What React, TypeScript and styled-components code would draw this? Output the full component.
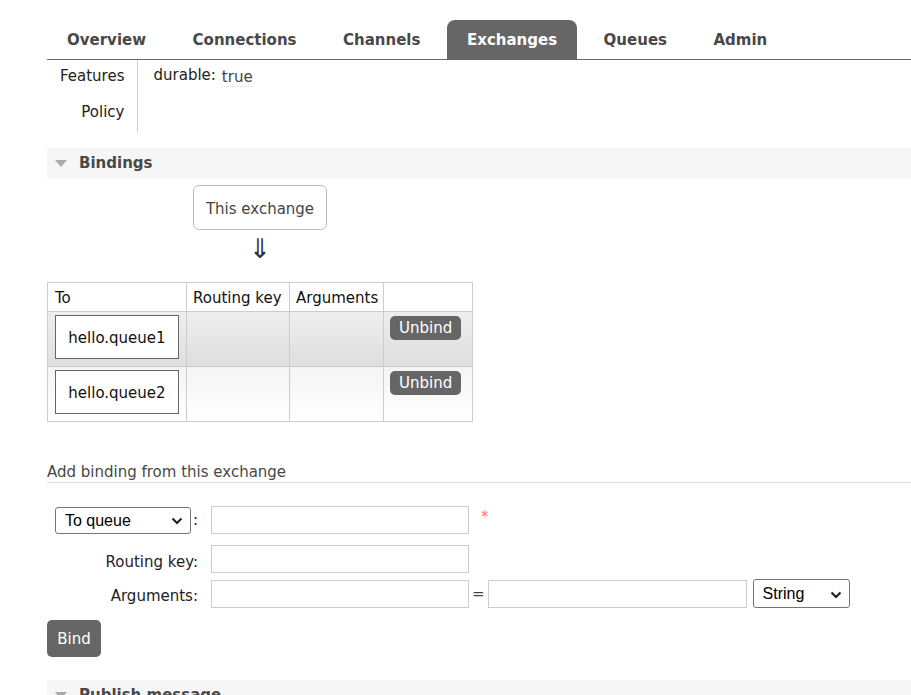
import React from "react";
import styled, { createGlobalStyle } from "styled-components";

const Global = createGlobalStyle`
  html, body { margin: 0; padding: 0; background: #fff; }
  body {
    font-family: "DejaVu Sans", Verdana, sans-serif;
    font-size: 15px;
    color: #333;
    overflow: hidden;
  }
  * { box-sizing: border-box; }
`;

const Page = styled.div`
  padding: 20px 0 0 47px;
  width: 911px;
`;

const Nav = styled.ul`
  display: flex;
  list-style: none;
  margin: 0;
  padding: 0;
  border-bottom: 1px solid #666;
`;

const Tab = styled.li<{ $active?: boolean }>`
  height: 39px;
  line-height: 37px;
  padding: 2px 20px 0;
  margin-right: 6.5px;
  font-weight: bold;
  font-size: 15px;
  color: ${(p) => (p.$active ? "#fff" : "#484848")};
  background: ${(p) => (p.$active ? "#666" : "transparent")};
  border-radius: 8px 8px 0 0;
`;

const Facts = styled.table`
  border-collapse: collapse;
  margin: 0;
`;

const FactLabel = styled.th`
  width: 90px;
  text-align: right;
  font-weight: normal;
  color: #222;
  padding: 6px 12px 10px 0;
  line-height: 20px;
  height: 36px;
  vertical-align: top;
  border-right: 1px solid #ccc;
`;

const FactValue = styled.td`
  padding: 5px 0 10px 16px;
  line-height: 20px;
  vertical-align: top;
  color: #222;
`;

const Value = styled.span`
  margin-left: 6px;
  color: #444;
  border-bottom: 1px dotted #ddd;
  position: relative;
  top: 2px;
`;

const SectionHeader = styled.div<{ $mt: number }>`
  margin-top: ${(p) => p.$mt}px;
  height: 30px;
  background: #f6f6f6;
  display: flex;
  align-items: center;
  padding-left: 8px;
  font-weight: bold;
  color: #484848;
`;

const Triangle = styled.span`
  width: 0;
  height: 0;
  border-left: 6.5px solid transparent;
  border-right: 6.5px solid transparent;
  border-top: 7px solid #aaa;
  margin-right: 12px;
`;

const Diagram = styled.div`
  margin-left: 146px;
  margin-top: 7px;
  width: 134px;
  display: flex;
  flex-direction: column;
  align-items: center;
`;

const ExchangeBox = styled.div`
  width: 134px;
  height: 45px;
  padding-top: 2px;
  border: 1px solid #bbb;
  border-radius: 6px;
  display: flex;
  align-items: center;
  justify-content: center;
  color: #444;
`;

const Arrow = styled.div`
  font-size: 27px;
  line-height: 30px;
  margin-top: 4px;
  color: #333;
`;

const BindTable = styled.table`
  margin-top: 18px;
  border-collapse: collapse;
  table-layout: fixed;
  width: 426px;
`;

const Th = styled.th<{ $w: number; $pl?: number }>`
  width: ${(p) => p.$w}px;
  border: 1px solid #ccc;
  text-align: left;
  font-weight: normal;
  color: #111;
  height: 29px;
  padding: 2px 0 0 ${(p) => p.$pl ?? 6}px;
  white-space: nowrap;
`;

const Tr = styled.tr<{ $alt: number }>`
  background: ${(p) =>
    p.$alt === 1
      ? "linear-gradient(#eeeeee, #dedede)"
      : "linear-gradient(#f4f4f4, #ffffff)"};
`;

const Td = styled.td<{ $pl?: number }>`
  border: 1px solid #ccc;
  height: 55px;
  vertical-align: top;
  padding: 3px 0 0 ${(p) => p.$pl ?? 7}px;
`;

const QueueBox = styled.div`
  width: 124px;
  height: 44px;
  padding-top: 2px;
  border: 1px solid #666;
  background: #fff;
  display: flex;
  align-items: center;
  justify-content: center;
  color: #111;
`;

const SmallButton = styled.button`
  margin-top: 1px;
  height: 24px;
  padding: 0 9px;
  border: none;
  border-radius: 5px;
  background: #666;
  color: #fff;
  font-family: "DejaVu Sans", Verdana, sans-serif;
  font-size: 15px;
  line-height: 24px;
`;

const SubHeading = styled.div`
  margin-top: 41px;
  color: #484848;
  line-height: 19px;
  border-bottom: 1px solid #ddd;
`;

const Form = styled.div`
  margin-top: 23px;
  display: flex;
  flex-direction: column;
`;

const FormRow = styled.div<{ $mt?: number }>`
  display: flex;
  align-items: center;
  margin-top: ${(p) => p.$mt ?? 0}px;
`;

const Label = styled.div<{ $text?: boolean }>`
  width: 151px;
  height: 28px;
  display: flex;
  justify-content: flex-end;
  align-items: center;
  margin-right: 13px;
  color: #222;
  padding-top: ${(p) => (p.$text ? 5 : 0)}px;
`;

const Colon = styled.span`
  margin-left: 2px;
  color: #222;
`;

const SelectWrap = styled.div<{ $w: number; $h: number; $ml?: number }>`
  position: relative;
  flex: none;
  width: ${(p) => p.$w}px;
  height: ${(p) => p.$h}px;
  margin-left: ${(p) => p.$ml ?? 0}px;
`;

const Select = styled.select`
  appearance: none;
  -webkit-appearance: none;
  width: 100%;
  height: 100%;
  border: 1px solid #767676;
  border-radius: 3px;
  background: #fff;
  padding: 0 0 0 9px;
  font-family: "Liberation Sans", Arial, sans-serif;
  font-size: 16px;
  color: #000;
`;

const Chevron = styled.svg`
  position: absolute;
  right: 8px;
  top: 50%;
  margin-top: -3px;
  pointer-events: none;
`;

const Input = styled.input<{ $w: number }>`
  flex: none;
  width: ${(p) => p.$w}px;
  height: 28px;
  border: 1px solid #ccc;
  background: #fff;
  padding: 0 4px;
`;

const Required = styled.span`
  margin-left: 12px;
  color: #f77;
  font-size: 15px;
  position: relative;
  top: -3px;
`;

const Equals = styled.span`
  margin: 0 3px 0 3px;
  color: #444;
`;

const BindButton = styled.button`
  margin-top: 12px;
  width: 54px;
  height: 37px;
  border: none;
  border-radius: 5px;
  background: #666;
  color: #fff;
  font-family: "DejaVu Sans", Verdana, sans-serif;
  font-size: 15px;
  padding: 0;
`;

const Chev = () => (
  <Chevron width="12" height="8" viewBox="0 0 12 8">
    <polyline points="1.5,1.5 6,6 10.5,1.5" fill="none" stroke="#222" strokeWidth="2.2" />
  </Chevron>
);

const tabs = ["Overview", "Connections", "Channels", "Exchanges", "Queues", "Admin"];

const bindings = ["hello.queue1", "hello.queue2"];

export default function App() {
  return (
    <>
      <Global />
      <Page>
        <Nav>
          {tabs.map((t) => (
            <Tab key={t} $active={t === "Exchanges"}>
              {t}
            </Tab>
          ))}
        </Nav>

        <Facts>
          <tbody>
            <tr>
              <FactLabel>Features</FactLabel>
              <FactValue>
                durable:<Value>true</Value>
              </FactValue>
            </tr>
            <tr>
              <FactLabel>Policy</FactLabel>
              <FactValue />
            </tr>
          </tbody>
        </Facts>

        <SectionHeader $mt={16}>
          <Triangle />
          Bindings
        </SectionHeader>

        <Diagram>
          <ExchangeBox>This exchange</ExchangeBox>
          <Arrow>⇓</Arrow>
        </Diagram>

        <BindTable>
          <thead>
            <tr>
              <Th $w={139} $pl={7}>To</Th>
              <Th $w={103}>Routing key</Th>
              <Th $w={94}>Arguments</Th>
              <Th $w={89} />
            </tr>
          </thead>
          <tbody>
            {bindings.map((q, i) => (
              <Tr key={q} $alt={i % 2 === 0 ? 1 : 2}>
                <Td>
                  <QueueBox>{q}</QueueBox>
                </Td>
                <Td />
                <Td />
                <Td $pl={6}>
                  <SmallButton>Unbind</SmallButton>
                </Td>
              </Tr>
            ))}
          </tbody>
        </BindTable>

        <SubHeading>Add binding from this exchange</SubHeading>

        <Form>
          <FormRow>
            <Label>
              <SelectWrap $w={136} $h={27}>
                <Select defaultValue="queue">
                  <option value="queue">To queue</option>
                  <option value="exchange">To exchange</option>
                </Select>
                <Chev />
              </SelectWrap>
              <Colon>:</Colon>
            </Label>
            <Input $w={258} />
            <Required>*</Required>
          </FormRow>
          <FormRow $mt={11}>
            <Label $text>Routing key:</Label>
            <Input $w={258} />
          </FormRow>
          <FormRow $mt={6}>
            <Label $text>Arguments:</Label>
            <Input $w={258} />
            <Equals>=</Equals>
            <Input $w={259} />
            <SelectWrap $w={97} $h={29} $ml={6}>
              <Select defaultValue="string">
                <option value="string">String</option>
                <option value="number">Number</option>
                <option value="boolean">Boolean</option>
              </Select>
              <Chev />
            </SelectWrap>
          </FormRow>
          <div>
            <BindButton>Bind</BindButton>
          </div>
        </Form>

        <SectionHeader $mt={23}>
          <Triangle />
          Publish message
        </SectionHeader>
      </Page>
    </>
  );
}
